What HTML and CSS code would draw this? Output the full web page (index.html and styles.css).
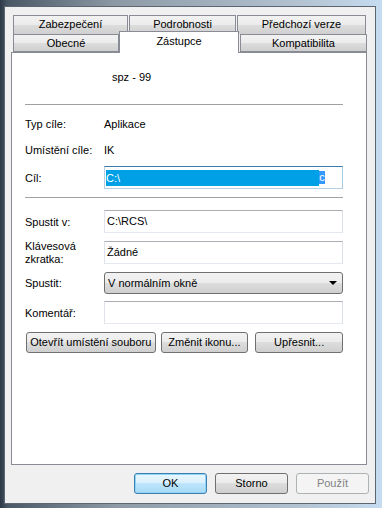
FILE: index.html
```html
<!DOCTYPE html>
<html>
<head>
	<title>Vlastnosti - spz - 99</title>
	<link rel="stylesheet" href="styles.css">
</head>
<body>
	<div class="window">
		<div class="dialog">
			<div class="tabs">
				<div class="tab-row row-back">
					<div class="tab tab-security">Zabezpečení</div>
					<div class="tab tab-details">Podrobnosti</div>
					<div class="tab tab-versions">Předchozí verze</div>
				</div>
				<div class="tab-row row-front">
					<div class="tab tab-general">Obecné</div>
					<div class="tab tab-shortcut active">Zástupce</div>
					<div class="tab tab-compat">Kompatibilita</div>
				</div>
				<div class="panel">
					<div class="name-row">spz - 99</div>
					<div class="separator"></div>

					<div class="row info first-info">
						<span class="label">Typ cíle:</span>
						<span class="value">Aplikace</span>
					</div>
					<div class="row info">
						<span class="label">Umístění cíle:</span>
						<span class="value">IK</span>
					</div>
					<div class="row field-row first">
						<span class="label">Cíl:</span>
						<div class="field focused">
							<span class="selection">C:\</span><span class="sel-tail">c</span>
						</div>
					</div>
					<div class="separator second"></div>

					<div class="row field-row start">
						<span class="label">Spustit v:</span>
						<div class="field">C:\RCS\</div>
					</div>
					<div class="row field-row">
						<span class="label two-lines">Klávesová<br>zkratka:</span>
						<div class="field">Žádné</div>
					</div>
					<div class="row field-row select-row">
						<span class="label">Spustit:</span>
						<div class="select">
							<span>V normálním okně</span>
							<span class="arrow"></span>
						</div>
					</div>
					<div class="row field-row comment-row">
						<span class="label">Komentář:</span>
						<div class="field"></div>
					</div>
					<div class="actions">
						<div class="button btn-open">Otevřít umístění souboru</div>
						<div class="button btn-icon">Změnit ikonu...</div>
						<div class="button btn-more">Upřesnit...</div>
					</div>
				</div>
			</div>
			<div class="footer">
				<div class="button default">OK</div>
				<div class="button">Storno</div>
				<div class="button disabled">Použít</div>
			</div>
		</div>
	</div>
</body>
</html>
```

FILE: styles.css
```css
body {
	margin: 0;
	padding: 0;
	font-family: "Liberation Sans", Arial, sans-serif;
	font-size: 11px;
	color: #000;
}
.window {
	width: 382px;
	height: 508px;
	overflow: hidden;
	background: linear-gradient(to right, #2c3846 0, #4a5866 2%, #8d9aa6 30%, #b4c4d3 80%, #c6dcf0 100%);
}
.dialog {
	box-sizing: border-box;
	width: 372px;
	height: 498px;
	margin: 6px 0 0 4px;
	display: inline-block;
	vertical-align: top;
	border: 1px solid #5d6670;
	background-color: #f0f0f0;
}
.tabs {
	padding: 8px 7px 0 6px;
}
.tab-row {
	display: flex;
	margin-left: 2px;
}
.row-back {
	height: 19px;
	gap: 1px;
}
.row-front {
	height: 18px;
	align-items: flex-end;
}
.tab {
	box-sizing: border-box;
	text-align: center;
	border: 1px solid #898c95;
	background: linear-gradient(#f2f2f2 0, #ebebeb 50%, #dddddd 50%, #cfcfcf 100%);
	height: 19px;
	line-height: 17px;
}
.row-back .tab {
	border-bottom: none;
}
.row-front .tab {
	height: 18px;
	line-height: 17px;
}
.tab-security { width: 115px; }
.tab-details { width: 107px; }
.tab-versions { width: 129px; }
.tab-general { width: 106px; }
.tab-compat { width: 127px; margin-left: 1px; }
.row-front .tab.active {
	position: relative;
	z-index: 1;
	width: 120px;
	height: 22px;
	margin-bottom: -1px;
	line-height: 18px;
	background: #fff;
	border-bottom: none;
}
.panel {
	box-sizing: border-box;
	width: 356px;
	height: 413px;
	border: 1px solid #898c95;
	background-color: #fff;
	padding: 0 23px 0 13px;
}
.name-row {
	height: 48px;
	line-height: 48px;
	padding-left: 87px;
}
.separator {
	height: 1px;
	margin-top: 3px;
	background-color: #a0a0a0;
}
.separator.second {
	margin-top: 8px;
}
.row {
	display: flex;
	align-items: center;
}
.label {
	width: 79px;
	flex: none;
}
.two-lines {
	line-height: 13px;
}
.info {
	height: 26px;
}
.info.first-info {
	margin-top: 6px;
}
.field-row {
	height: 23px;
	margin-top: 8px;
}
.field-row.first {
	margin-top: 3px;
}
.field-row.start {
	margin-top: 12px;
}
.select-row {
	height: 22px;
}
.comment-row {
	margin-top: 7px;
}
.field {
	box-sizing: border-box;
	flex: 1;
	height: 23px;
	line-height: 21px;
	padding-left: 2px;
	border: 1px solid;
	border-color: #abadb3 #dbdfe6 #e3e9ef #e2e3ea;
	background-color: #fff;
}
.field.focused {
	border-color: #3d7bad #a4c9e3 #b5cfe7 #b5cfe7;
	display: flex;
	align-items: center;
	padding-left: 1px;
}
.selection {
	display: inline-block;
	width: 213px;
	height: 16px;
	line-height: 16px;
	color: #fff;
	background-color: #00a0e6;
}
.sel-tail {
	display: inline-block;
	width: 6px;
	height: 13px;
	line-height: 13px;
	color: #fff;
	background-color: #3399ff;
	text-align: center;
}
.select {
	box-sizing: border-box;
	flex: 1;
	height: 22px;
	display: flex;
	align-items: center;
	justify-content: space-between;
	padding: 0 5px 0 3px;
	border: 1px solid #707070;
	border-radius: 3px;
	background: linear-gradient(#f2f2f2 0, #ebebeb 50%, #dddddd 50%, #cfcfcf 100%);
}
.arrow {
	width: 0;
	height: 0;
	border-left: 4px solid transparent;
	border-right: 4px solid transparent;
	border-top: 4px solid #000;
}
.actions {
	display: flex;
	margin-top: 8px;
	padding-left: 1px;
}
.button {
	box-sizing: border-box;
	height: 21px;
	line-height: 19px;
	text-align: center;
	border: 1px solid #707070;
	border-radius: 3px;
	background: linear-gradient(#f2f2f2 0, #ebebeb 50%, #dddddd 50%, #cfcfcf 100%);
}
.btn-open { width: 130px; }
.btn-icon { width: 88px; margin-left: 5px; }
.btn-more { width: 88px; margin-left: 7px; }
.footer {
	display: flex;
	justify-content: flex-end;
	gap: 8px;
	margin-top: 8px;
	padding-right: 6px;
}
.footer .button {
	width: 73px;
}
.footer .button.default {
	border-color: #3c7fb1;
	background: linear-gradient(#eaf6fd 0, #d9f0fc 50%, #bee6fd 50%, #a7d9f5 100%);
	box-shadow: inset 0 0 0 1px #91d4f8;
}
.footer .button.disabled {
	color: #838383;
	border-color: #adb2b5;
	background: #f4f4f4;
}
```
